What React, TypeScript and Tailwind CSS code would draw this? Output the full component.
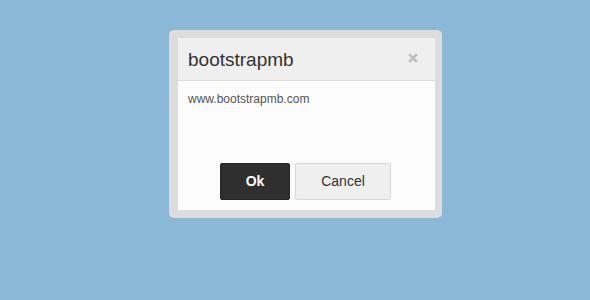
import React from 'react';

export default function App() {
  return (
    <div className="w-[590px] h-[300px] bg-[#8bb8d6] pt-[30px] pl-[169px] font-['Liberation_Sans',Arial,sans-serif]">
      <div className="w-[273px] h-[188px] rounded-[5px] bg-[#dddddd] pt-[8px] pb-[8px] pl-[9px] pr-[7px]">
        <div className="h-full bg-[#fcfcfc] flex flex-col">
          {/* header */}
          <div className="h-[43px] shrink-0 bg-[#efefef] border-b border-[#dcdcdc] flex items-center justify-between pl-[10px] pr-[17px]">
            <h3 className="text-[19px] text-[#333] leading-none">bootstrapmb</h3>
            <svg width="10" height="10" viewBox="0 0 10 10" className="block mb-[3px]">
              <path d="M1.2 1.2 L8.8 8.8 M8.8 1.2 L1.2 8.8" stroke="#bcbcbc" strokeWidth="2.6" strokeLinecap="butt" />
            </svg>
          </div>
          {/* body */}
          <div className="flex-1 flex flex-col justify-between pt-[10px] pb-[10px] px-[10px]">
            <p className="text-[12px] leading-[17px] text-[#555]">www.bootstrapmb.com</p>
            <div className="flex justify-center gap-[5px] pr-[2px]">
              <button className="w-[70px] h-[37px] rounded-[2px] bg-[#2f2f2f] border border-[#262626] text-white font-bold text-[14px]">
                Ok
              </button>
              <button className="w-[96px] h-[37px] rounded-[2px] bg-[#efefef] border border-[#d8d8d8] text-[#333] text-[14px]">
                Cancel
              </button>
            </div>
          </div>
        </div>
      </div>
    </div>
  );
}
